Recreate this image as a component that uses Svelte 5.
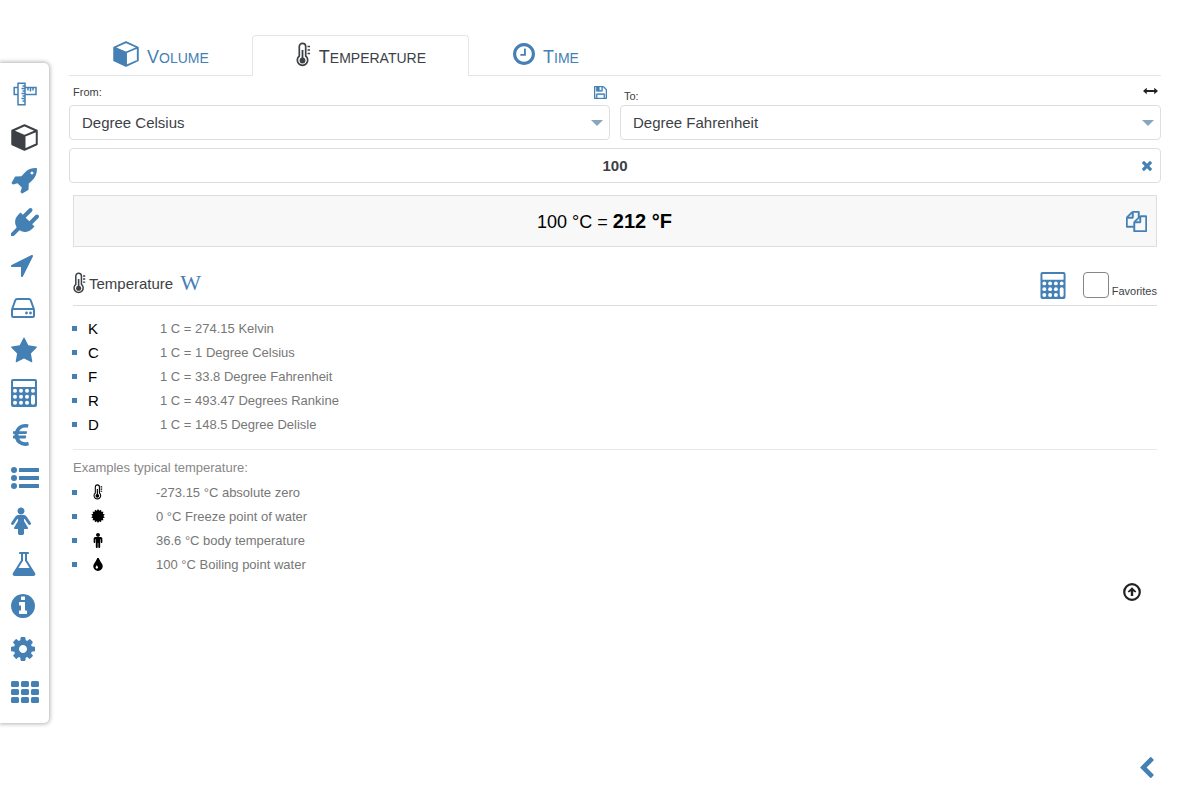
<script>
  const icons = {
    rocket: { box: '0 0 1664 1792', w: 26, d: 'M1440 448q0-40-28-68t-68-28-68 28-28 68 28 68 68 28 68-28 28-68zm224-288q0 249-75.5 430.5t-253.5 360.5q-81 80-195 176l-20 379q-2 16-16 26l-384 224q-7 4-16 4-12 0-23-9l-64-64q-13-14-8-32l85-276-281-281-276 85q-3 1-9 1-14 0-23-9l-64-64q-17-19-5-39l224-384q10-14 26-16l379-20q96-114 176-195 188-187 358-258t431-71q14 0 24 9.5t10 22.5z' },
    plug: { box: '0 0 1792 1792', w: 28, d: 'M1755 453q37 38 37 90.5t-37 90.5l-401 400 150 150-160 160q-163 163-389.5 186.5t-411.5-100.5l-362 362h-181v-181l362-362q-124-185-100.5-411.5t186.5-389.5l160-160 150 150 400-401q38-37 91-37t90 37 37 90.5-37 90.5l-400 401 234 234 401-400q38-37 91-37t90 37z' },
    arrow: { box: '192 0 1408 1792', w: 22, d: 'M1593 349l-640 1280q-17 35-57 35-5 0-15-2-22-5-35.5-22.5t-13.5-39.5v-576h-576q-22 0-39.5-13.5t-22.5-35.5 4-42 29-30l1280-640q13-7 29-7 27 0 45 19 15 14 18.5 34.5t-6.5 39.5z' },
    star: { box: '64 -64 1664 1792', w: 26, d: 'M1728 647q0 22-26 48l-363 354 86 500q1 7 1 20 0 21-10.5 35.5t-30.5 14.5q-19 0-40-12l-449-236-449 236q-22 12-40 12-21 0-31.5-14.5t-10.5-35.5q0-6 2-20l86-500-364-354q-25-27-25-48 0-37 56-46l502-73 225-455q19-41 49-41t49 41l225 455 502 73q56 9 56 46z' },
    euro: { box: '256 128 1152 1792', w: 18, d: 'M1362 1429l35 159q3 12-3 22.5t-17 14.5l-5 1q-4 2-10.5 3.5t-16 4.5-21.5 5.5-25.5 5-30 5-33.5 4.5-36.5 3-38.5 1q-234 0-409-130.5t-238-351.5h-95q-13 0-22.5-9.5t-9.5-22.5v-113q0-13 9.5-22.5t22.5-9.5h66q-2-57 1-105h-67q-14 0-23-9t-9-23v-114q0-14 9-23t23-9h98q67-210 243.5-338t400.5-128q102 0 194 23 11 3 20 15 6 11 3 24l-43 159q-3 13-14 19.5t-24 2.5l-4-1q-4-1-11.5-2.5l-17.5-3.5-22.5-3.5-26-3-29-2.5-29.5-1q-126 0-226 64t-150 176h468q16 0 25 12 10 12 7 26l-24 114q-5 26-32 26h-488q-3 37 0 105h459q15 0 25 12 9 12 6 27l-24 112q-2 11-11 18.5t-20 7.5h-387q48 117 149.5 185.5t228.5 68.5q18 0 36-1.5t33.5-3.5 29.5-4.5 24.5-5 18.5-4.5l12-3 5-2q13-5 26 2 12 7 15 21z' },
    female: { box: '0 0 1280 1792', w: 20, d: 'M1280 1056q0 40-28 68t-68 28q-51 0-80-43l-227-341h-45v132l247 411q9 15 9 33 0 26-19 45t-45 19h-192v272q0 46-33 79t-79 33h-160q-46 0-79-33t-33-79v-272h-192q-26 0-45-19t-19-45q0-18 9-33l247-411v-132h-45l-227 341q-29 43-80 43-40 0-68-28t-28-68q0-29 16-53l256-384q73-107 176-107h384q103 0 176 107l256 384q16 24 16 53zm-416-800q0 93-65.5 158.5t-158.5 65.5-158.5-65.5-65.5-158.5 65.5-158.5 158.5-65.5 158.5 65.5 65.5 158.5z' },
    flask: { box: '64 0 1664 1792', w: 26, d: 'M1591 1448q56 89 21.5 152.5t-140.5 63.5h-1152q-106 0-140.5-63.5t21.5-152.5l503-793v-399h-64q-26 0-45-19t-19-45 19-45 45-19h512q26 0 45 19t19 45-19 45-45 19h-64v399zm-779-725l-272 429h712l-272-429-20-31v-436h-128v436z' },
    info: { box: '128 0 1536 1792', w: 24, d: 'M1152 1376v-160q0-14-9-23t-23-9h-96v-512q0-14-9-23t-23-9h-320q-14 0-23 9t-9 23v160q0 14 9 23t23 9h96v320h-96q-14 0-23 9t-9 23v160q0 14 9 23t23 9h448q14 0 23-9t9-23zm-128-896v-160q0-14-9-23t-23-9h-192q-14 0-23 9t-9 23v160q0 14 9 23t23 9h192q14 0 23-9t9-23zm640 416q0 209-103 385.5t-279.5 279.5-385.5 103-385.5-103-279.5-279.5-103-385.5 103-385.5 279.5-279.5 385.5-103 385.5 103 279.5 279.5 103 385.5z' },
    cog: { box: '128 0 1536 1792', w: 24, d: 'M1152 896q0-106-75-181t-181-75-181 75-75 181 75 181 181 75 181-75 75-181zm512-109v222q0 12-8 23t-20 13l-185 28q-19 54-39 91 35 50 107 138 10 12 10 25t-9 23q-27 37-99 108t-94 71q-12 0-26-9l-138-108q-44 23-91 38-16 136-29 186-7 28-36 28h-222q-14 0-24.5-8.5t-11.5-21.5l-28-184q-49-16-90-37l-141 107q-10 9-25 9-14 0-25-11-126-114-165-168-7-10-7-23 0-12 8-23 15-21 51-66.5t54-70.5q-27-50-41-99l-183-27q-13-2-21-12.5t-8-23.5v-222q0-12 8-23t19-13l186-28q14-46 39-92-40-57-107-138-10-12-10-24 0-10 9-23 26-36 98.5-107.5t94.5-71.5q13 0 26 10l138 107q44-23 91-38 16-136 29-186 7-28 36-28h222q14 0 24.5 8.5t11.5 21.5l28 184q49 16 90 37l142-107q9-9 24-9 13 0 25 10 129 119 165 170 7 8 7 22 0 12-8 23-15 21-51 66.5t-54 70.5q26 50 41 98l183 28q13 2 21 12.5t8 23.5z' },
    clock: { box: '128 128 1536 1536', d: 'M1024 544v448q0 14-9 23t-23 9h-320q-14 0-23-9t-9-23v-64q0-14 9-23t23-9h224v-352q0-14 9-23t23-9h64q14 0 23 9t9 23zm416 352q0-148-73-273t-198-198-273-73-273 73-198 198-73 273 73 273 198 198 273 73 273-73 198-198 73-273zm224 0q0 209-103 385.5t-279.5 279.5-385.5 103-385.5-103-279.5-279.5-103-385.5 103-385.5 279.5-279.5 385.5-103 385.5 103 279.5 279.5 103 385.5z' },
    save: { box: '128 128 1536 1536', bold: 40, d: 'M512 1536h768v-384h-768v384zm896 0h128v-896q0-14-10-38.5t-20-34.5l-281-281q-10-10-34-20t-39-10v416q0 40-28 68t-68 28h-576q-40 0-68-28t-28-68v-416h-128v1280h128v-416q0-40 28-68t68-28h832q40 0 68 28t28 68v416zm-384-928v-320q0-13-9.5-22.5t-22.5-9.5h-192q-13 0-22.5 9.5t-9.5 22.5v320q0 13 9.5 22.5t22.5 9.5h192q13 0 22.5-9.5t9.5-22.5zm640 32v928q0 40-28 68t-68 28h-1344q-40 0-68-28t-28-68v-1344q0-40 28-68t68-28h928q40 0 88 20t76 48l280 280q28 28 48 76t20 88z' },
    times: { box: '302 366 1188 1188', d: 'M1490 1322q0 40-28 68l-136 136q-28 28-68 28t-68-28l-294-294-294 294q-28 28-68 28t-68-28l-136-136q-28-28-28-68t28-68l294-294-294-294q-28-28-28-68t28-68l136-136q28-28 68-28t68 28l294 294 294-294q28-28 68-28t68 28l136 136q28 28 28 68t-28 68l-294 294 294 294q28 28 28 68z' },
    copy: { box: '0 0 1792 1792', bold: 40, d: 'M1696 384q40 0 68 28t28 68v1216q0 40-28 68t-68 28h-960q-40 0-68-28t-28-68v-288h-544q-40 0-68-28t-28-68v-672q0-40 20-88t48-76l408-408q28-28 76-48t88-20h416q40 0 68 28t28 68v328q68-40 128-40h416zm-544 213l-299 299h299v-299zm-640-384l-299 299h299v-299zm196 647l316-316v-416h-384v416q0 40-28 68t-68 28h-416v640h512v-256q0-40 20-88t48-76zm956 804v-1152h-384v416q0 40-28 68t-68 28h-416v640h896z' },
    chevron: { box: '410 26 1036 1612', d: 'M1427 301l-531 531 531 531q19 19 19 45t-19 45l-166 166q-19 19-45 19t-45-19l-742-742q-19-19-19-45t19-45l742-742q19-19 45-19t45 19l166 166q19 19 19 45t-19 45z' },
    male: { box: '0 160 1024 1760', d: 'M1024 832v416q0 40-28 68t-68 28-68-28-28-68v-352h-64v912q0 46-33 79t-79 33-79-33-33-79v-464h-64v464q0 46-33 79t-79 33-79-33-33-79v-912h-64v352q0 40-28 68t-68 28-68-28-28-68v-416q0-80 56-136t136-56h640q80 0 136 56t56 136zm-288-448q0 93-65.5 158.5t-158.5 65.5-158.5-65.5-65.5-158.5 65.5-158.5 158.5-65.5 158.5 65.5 65.5 158.5z' },
    drop: { box: '384 128 1024 1408', d: 'M896 1152q0-36-20-69-1-1-15.5-22.5t-25.5-38-25-44-21-50.5q-4-16-21-16t-21 16q-7 23-21 50.5t-25 44-25.5 38-15.5 22.5q-20 33-20 69 0 53 37.5 90.5t90.5 37.5 90.5-37.5 37.5-90.5zm512-128q0 212-150 362t-362 150-362-150-150-362q0-145 81-275 6-9 62.5-90.5t101-151 99.5-178 83-201.5q9-30 34-47t51-17 51.5 17 33.5 47q28 93 83 201.5t99.5 178 101 151 62.5 90.5q81 127 81 275z' }
  };

  // Toothed disc: outer and inner radius alternate around the centre.
  const burst = Array.from({ length: 28 }, (_, i) => {
    const r = i % 2 ? 7.6 : 10;
    const a = (i * Math.PI) / 14;
    return `${(10 + r * Math.sin(a)).toFixed(2)},${(10 - r * Math.cos(a)).toFixed(2)}`;
  }).join(' ');

  const menu = [
    ['ruler', 'Length'], ['cube', 'Volume'], ['rocket', 'Speed'], ['plug', 'Energy'],
    ['arrow', 'Navigation'], ['drive', 'Data'], ['star', 'Favorites'], ['calculator', 'Calculator'],
    ['euro', 'Currency'], ['list', 'Lists'], ['female', 'Sizes'], ['flask', 'Chemistry'],
    ['info', 'Info'], ['cog', 'Settings'], ['grid', 'All units']
  ];

  const units = ['Kelvin', 'Degree Celsius', 'Degree Fahrenheit', 'Degrees Rankine', 'Degree Delisle'];
  const conversions = [
    ['K', '274.15 Kelvin'], ['C', '1 Degree Celsius'], ['F', '33.8 Degree Fahrenheit'],
    ['R', '493.47 Degrees Rankine'], ['D', '148.5 Degree Delisle']
  ];
  const examples = [
    ['thermo', '-273.15 °C absolute zero'], ['burst', '0 °C Freeze point of water'],
    ['male', '36.6 °C body temperature'], ['drop', '100 °C Boiling point water']
  ];

  let from = $state('Degree Celsius');
  let to = $state('Degree Fahrenheit');
  let amount = $state('100');
  let favorite = $state(false);
</script>

{#snippet icon(name, w, h)}
  {#if name === 'ruler'}
    <svg width={w} height={h} viewBox="0 0 24 24" fill="none" stroke="currentColor" stroke-width="1.500" aria-hidden="true">
      <path d="M12 5.500h11v7H12M5 5.500H1.200v7H5M15 5.500v3M17.500 5.500v4M20 5.500v3" />
      <path d="M5 1.200h7v21.600H5zM12 4H9.500M12 6.500H8.500M12 9H9.500M12 11.500H8.500M12 14H9.500M12 16.500H8.500M12 19H9.500" />
    </svg>
  {:else if name === 'cube'}
    <svg width={w} height={h} viewBox="0 0 26 26" aria-hidden="true">
      <path d="M1.200 6.500 13 1.200 24.800 6.500v13L13 24.800 1.200 19.500zM1.200 6.500 13 11.500l11.800-5M13 11.500v13.300" fill="none" stroke="currentColor" stroke-width="1.900" stroke-linejoin="round" />
      <path d="M1.200 6.500 13 11.500v13.300L1.200 19.500z" fill="currentColor" />
    </svg>
  {:else if name === 'drive'}
    <svg width={w} height={h} viewBox="0 0 24 20" fill="none" stroke="currentColor" stroke-width="2" stroke-linejoin="round" aria-hidden="true">
      <path d="M1 11.500 4.200 2.500Q4.700 1 6.200 1h11.600q1.500 0 2 1.500L23 11.500" />
      <rect x="1" y="11" width="22" height="8" rx="1.500" />
      <circle cx="15.500" cy="15" r="1.400" fill="currentColor" stroke="none" />
      <circle cx="19.500" cy="15" r="1.400" fill="currentColor" stroke="none" />
    </svg>
  {:else if name === 'calculator'}
    <svg width={w} height={h} viewBox="0 0 26 28" aria-hidden="true">
      <rect x="0" y="0" width="26" height="28" rx="2" fill="currentColor" />
      <g fill="#fff">
        <rect x="2" y="2" width="22" height="6" rx="0.500" />
        {#each [11.8, 17.8, 23.8] as cy}
          {#each [4, 10, 16] as cx}<circle {cx} {cy} r="2" />{/each}
        {/each}
        <circle cx="22" cy="11.800" r="2" />
        <rect x="20" y="15.800" width="4" height="10" rx="2" />
      </g>
    </svg>
  {:else if name === 'list'}
    <svg width={w} height={h} viewBox="0 0 28 22" fill="currentColor" aria-hidden="true">
      {#each [3, 11, 19] as y}
        <circle cx="3" cy={y} r="3" /><rect x="8" y={y - 2} width="20" height="4" rx="0.500" />
      {/each}
    </svg>
  {:else if name === 'grid'}
    <svg width={w} height={h} viewBox="0 0 28 22" fill="currentColor" aria-hidden="true">
      {#each [0, 8, 16] as y}
        {#each [0, 10, 20] as x}<rect {x} {y} width="8" height="6" rx="1.500" />{/each}
      {/each}
    </svg>
  {:else if name === 'thermo'}
    <svg width={w} height={h} viewBox="0 0 14 25" fill="none" stroke="currentColor" aria-hidden="true">
      <path d="M2.800 14V4.500a3.200 3.200 0 0 1 6.400 0V14a5.200 5.200 0 1 1-6.400 0z" stroke-width="1.700" />
      <path d="M6 8v9" stroke-width="1.800" />
      <circle cx="6" cy="18.500" r="2.900" fill="currentColor" stroke="none" />
      <path d="M11 4.500h2.500M11 8h2.500M11 11.500h2.500" stroke-width="1.600" />
    </svg>
  {:else if name === 'swap'}
    <svg width={w} height={h} viewBox="0 0 16 8" fill="currentColor" aria-hidden="true">
      <path d="M0 4 4 .600v2.300h8V.600L16 4 12 7.400V5.100H4v2.300z" />
    </svg>
  {:else if name === 'burst'}
    <svg width={w} height={h} viewBox="0 0 20 20" fill="currentColor" aria-hidden="true"><polygon points={burst} /></svg>
  {:else if name === 'up'}
    <svg width={w} height={h} viewBox="0 0 18 18" fill="none" stroke="currentColor" aria-hidden="true">
      <circle cx="9" cy="9" r="7.800" stroke-width="2.200" />
      <path d="M9 4.200 13.300 8.500 12.200 9.600 10.200 8.200V13H7.800V8.200L5.800 9.600 4.700 8.500z" fill="currentColor" stroke="none" />
    </svg>
  {:else}
    <svg width={w} height={h} viewBox={icons[name].box} fill="currentColor" stroke="currentColor" stroke-width={icons[name].bold ?? 0} aria-hidden="true"><path d={icons[name].d} /></svg>
  {/if}
{/snippet}

{#snippet caret()}
  <svg class="caret" width="12" height="6" viewBox="0 0 12 6" aria-hidden="true"><path d="M0 0h12L6 6z" fill="#86a8bf" /></svg>
{/snippet}

<div class="page">
  <nav class="side" aria-label="Categories">
    {#each menu as [name, label]}
      <a href="#{name}" aria-label={label} class:current={name === 'cube'}>
        {#if icons[name]}
          {@render icon(name, icons[name].w, 28)}
        {:else if name === 'ruler'}
          <span class="inset">{@render icon(name, 24, 24)}</span>
        {:else if name === 'cube'}
          {@render icon(name, 27, 27)}
        {:else if name === 'drive'}
          {@render icon(name, 24, 20)}
        {:else if name === 'calculator'}
          {@render icon(name, 26, 28)}
        {:else}
          {@render icon(name, 28, 22)}
        {/if}
      </a>
    {/each}
  </nav>

  <main>
    <nav class="tabs" aria-label="Measures">
      <a href="#volume">{@render icon('cube', 26, 26)}<span>Volume</span></a>
      <a href="#temperature" class="active" aria-current="page">{@render icon('thermo', 15, 25)}<span>Temperature</span></a>
      <a href="#time">{@render icon('clock', 22, 22)}<span>Time</span></a>
    </nav>

    <form onsubmit={(e) => e.preventDefault()}>
      <div class="pair">
        <div class="field">
          <div class="caption">
            <label for="from">From:</label>
            <button type="button" class="blue save" aria-label="Save">{@render icon('save', 13, 13)}</button>
          </div>
          <div class="box">
            <select id="from" bind:value={from}>
              {#each units as u}<option>{u}</option>{/each}
            </select>
            {@render caret()}
          </div>
        </div>
        <div class="field">
          <div class="caption low">
            <label for="to">To:</label>
            <button type="button" class="swap" aria-label="Swap units">{@render icon('swap', 15, 8)}</button>
          </div>
          <div class="box">
            <select id="to" bind:value={to}>
              {#each units as u}<option>{u}</option>{/each}
            </select>
            {@render caret()}
          </div>
        </div>
      </div>
      <div class="box amount">
        <input type="text" aria-label="Amount" bind:value={amount} />
        <button type="button" class="blue clear" aria-label="Clear" onclick={() => (amount = '')}>{@render icon('times', 10, 10)}</button>
      </div>
    </form>

    <section class="result">
      <output>100 °C = <strong>212 °F</strong></output>
      <button type="button" class="blue copy" aria-label="Copy">{@render icon('copy', 21, 21)}</button>
    </section>

    <header class="title">
      {@render icon('thermo', 13, 22)}
      <h1>Temperature</h1>
      <a class="wiki" href="#wiki">W</a>
      <button type="button" class="blue calc" aria-label="Calculator">{@render icon('calculator', 26, 27)}</button>
      <input id="fav" type="checkbox" bind:checked={favorite} />
      <label for="fav">Favorites</label>
    </header>

    <ul>
      {#each conversions as [sign, text]}
        <li><span class="sign">{sign}</span><span>1 C = {text}</span></li>
      {/each}
    </ul>

    <section class="examples">
      <h2>Examples typical temperature:</h2>
      <ul>
        {#each examples as [name, text]}
          <li>
            <span class="sign pic">
              {#if name === 'thermo'}{@render icon(name, 10, 16)}
              {:else if name === 'burst'}{@render icon(name, 14, 14)}
              {:else if name === 'male'}{@render icon(name, 10, 15)}
              {:else}{@render icon(name, 10, 13)}{/if}
            </span>
            <span>{text}</span>
          </li>
        {/each}
      </ul>
    </section>

    <button type="button" class="top" aria-label="Back to top">{@render icon('up', 18, 18)}</button>
    <button type="button" class="blue back" aria-label="Back">{@render icon('chevron', 14, 21)}</button>
  </main>
</div>

<style>
  :global(body) {
    background: #fff;
    font-family: 'Liberation Sans', Arial, sans-serif;
  }
  .page {
    display: flex;
    min-height: 100vh;
    color: #3d4146;
    --blue: #4480b4;
    --line: #dcdfe1;
  }
  svg { display: block; flex: none; }
  a { color: var(--blue); text-decoration: none; }
  button {
    display: block;
    padding: 0;
    border: 0;
    background: none;
    color: #222;
    cursor: pointer;
  }
  button.blue { color: var(--blue); }

  .side {
    display: flex;
    flex-direction: column;
    box-sizing: border-box;
    width: 49px;
    flex: none;
    margin: 63px 0 64px;
    padding: 10px 0;
    border-radius: 0 5px 5px 0;
    background: #fff;
    box-shadow: 0 0 4px 1px rgba(0, 0, 0, 0.3);
  }
  .side a {
    flex: 1;
    display: flex;
    align-items: center;
    padding-left: 11px;
  }
  .side a.current { color: #3d4146; }
  .inset { padding-left: 2px; }

  main {
    flex: 1;
    min-width: 0;
    display: flex;
    flex-direction: column;
    padding: 35px 19px 9px 20px;
  }

  .tabs {
    display: flex;
    height: 41px;
    box-shadow: inset 0 -1px #e3e5e7;
  }
  .tabs a {
    display: flex;
    align-items: center;
    gap: 8px;
    box-sizing: border-box;
    padding: 0 42px 4px 43px;
    border: 1px solid transparent;
    border-bottom: 0;
    border-radius: 4px 4px 0 0;
    font-size: 14px;
    text-transform: uppercase;
    line-height: 20px;
  }
  .tabs span { padding-top: 6px; }
  .tabs span::first-letter { font-size: 18px; }
  .tabs a.active {
    border-color: #e3e5e7;
    background: #fff;
    color: #3d4146;
  }

  .pair { display: flex; gap: 10px; }
  .field { flex: 1; min-width: 0; }
  .caption {
    display: flex;
    justify-content: space-between;
    align-items: center;
    height: 29px;
    padding: 0 3px 0 4px;
    font-size: 11px;
  }
  .caption .save { padding-top: 4px; }
  .caption .swap { padding-top: 1px; }
  .caption label { padding-top: 3px; }
  .low label { padding-top: 11px; }
  .box {
    display: grid;
    align-items: center;
    box-sizing: border-box;
    height: 35px;
    border: 1px solid var(--line);
    border-radius: 4px;
  }
  .box > :global(*) { grid-area: 1 / 1; }
  .box select, .box input {
    width: 100%;
    height: 100%;
    padding: 0 12px;
    border: 0;
    background: transparent;
    appearance: none;
    font: 15px 'Liberation Sans', Arial, sans-serif;
    color: #3d4146;
    box-sizing: border-box;
    outline: none;
  }
  .caret { justify-self: end; margin-right: 6px; pointer-events: none; }
  .amount { margin-top: 8px; }
  .box input { text-align: center; font-weight: bold; }
  .clear { justify-self: end; margin-right: 8px; }

  .result {
    display: grid;
    align-items: center;
    box-sizing: border-box;
    height: 52px;
    margin: 12px 4px 0;
    padding: 0 9px 0 12px;
    border: 1px solid var(--line);
    background: #f8f8f8;
    color: #000;
    font-size: 18px;
    text-align: center;
  }
  .result > * { grid-area: 1 / 1; }
  .result output { padding-right: 24px; }
  .result strong { font-size: 20px; }
  .copy { justify-self: end; }

  .title {
    display: flex;
    align-items: center;
    height: 44px;
    margin: 14px 4px 0;
    border-bottom: 1px solid var(--line);
  }
  .title h1 {
    margin: 0 7px 0 3px;
    font-size: 15px;
    font-weight: normal;
  }
  .wiki { font: 22px 'Liberation Serif', 'Times New Roman', serif; }
  .calc { margin-left: auto; margin-right: 17px; padding-top: 4px; }
  .title input {
    appearance: none;
    width: 26px;
    height: 26px;
    margin: 3px 3px 0 0;
    border: 1px solid #868686;
    border-radius: 4px;
    background: #fff;
  }
  .title input:checked { background: var(--blue); }
  .title label { padding-top: 16px; font-size: 11px; }

  ul {
    margin: 10px 3px 0;
    padding: 0;
    list-style: none;
    color: #777;
    font-size: 13px;
  }
  li { display: flex; align-items: center; height: 24px; }
  li::before {
    content: '';
    width: 5px;
    height: 5px;
    margin-right: 11px;
    background: var(--blue);
  }
  .sign { width: 72px; color: #000; font-size: 15px; }
  .pic { display: flex; justify-content: center; width: 20px; margin-right: 48px; }

  .examples { margin: 13px 4px 0; border-top: 1px solid #e6e8ea; }
  .examples h2 {
    margin: 10px 0 0;
    color: #888;
    font-size: 13px;
    font-weight: normal;
    line-height: 15px;
  }
  .examples ul { margin: 5px 0 0 -1px; }

  .top { align-self: flex-end; margin: 7px 20px 0 0; }
  .back { align-self: flex-end; margin: auto 7px 0 0; }
</style>
